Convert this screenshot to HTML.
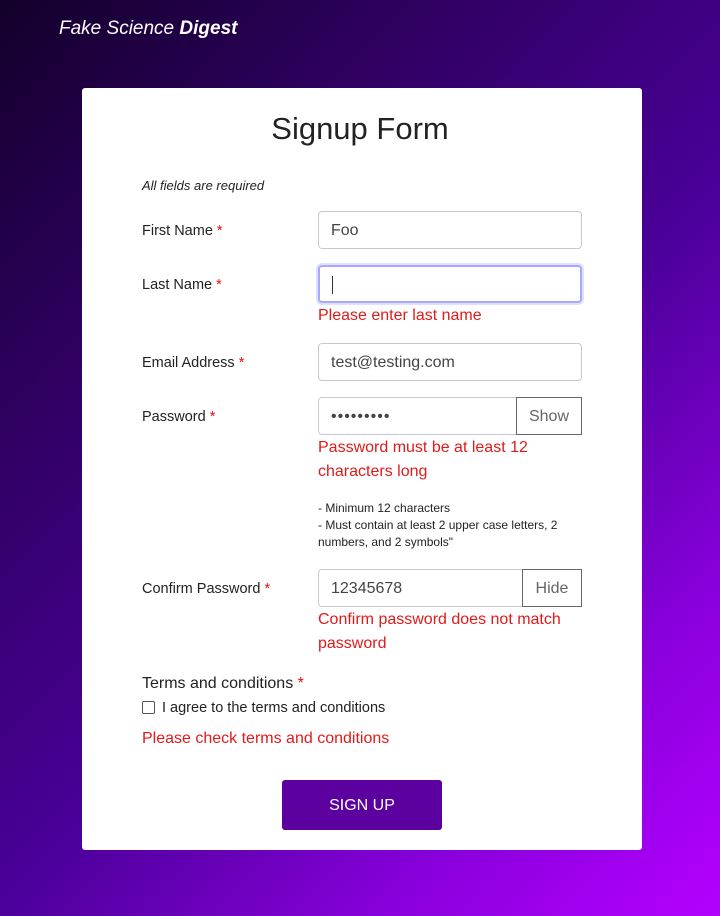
<!DOCTYPE html>
<html><head><meta charset="utf-8"><style>
*{box-sizing:border-box;margin:0;padding:0}
body{width:720px;height:916px;overflow:hidden;font-family:"Liberation Sans",sans-serif;background:linear-gradient(135deg,#13002a 0%,#2d005e 25%,#4a0098 55%,#8a00dd 80%,#b400ff 100%);position:relative}
.a{position:absolute}
.logo{left:59px;top:18px;color:#fff;font-style:italic;font-size:19px}
.card{left:82px;top:88px;width:560px;height:762px;background:#fff;border-radius:3px}
h1{position:absolute;left:0;width:720px;top:111px;text-align:center;font-weight:normal;font-size:31px;color:#222}
.lbl{font-size:14.5px;color:#222;left:142px}
.lbl b{color:#e01010;font-weight:normal}
.in{left:318px;width:264px;height:38px;border:1px solid #c8c8d0;border-radius:4px;font-size:16px;color:#444;padding:10px 12px;background:#fff}
.err{left:318px;color:#e01a1a;font-size:16px;line-height:24px}
.btn{border:1px solid #666;font-size:16px;color:#666;height:38px;text-align:center;padding-top:10px;background:#fff}
</style></head><body>
<div class="a logo">Fake Science <b>Digest</b></div>
<div class="a card"></div>
<h1>Signup Form</h1>
<div class="a" style="left:142px;top:178px;font-size:13px;font-style:italic;color:#222">All fields are required</div>
<div class="a lbl" style="top:223px">First Name <b>*</b></div>
<div class="a in" style="top:211px">Foo</div>
<div class="a lbl" style="top:277px">Last Name <b>*</b></div>
<div class="a in" style="top:265px;border:2px solid #a8a8ff;box-shadow:0 0 0 2px #e0e0ff"><span style="display:inline-block;width:1px;height:18px;background:#333;margin-top:-1px"></span></div>
<div class="a err" style="top:304px">Please enter last name</div>
<div class="a lbl" style="top:355px">Email Address <b>*</b></div>
<div class="a in" style="top:343px">test@testing.com</div>
<div class="a lbl" style="top:409px">Password <b>*</b></div>
<div class="a in" style="top:397px;width:200px;border-radius:4px 0 0 4px;letter-spacing:1px">•••••••••</div>
<div class="a btn" style="left:516px;top:397px;width:66px">Show</div>
<div class="a err" style="top:436px">Password must be at least 12<br>characters long</div>
<div class="a" style="left:318px;top:500px;font-size:12px;line-height:17px;color:#222">- Minimum 12 characters<br>- Must contain at least 2 upper case letters, 2<br>numbers, and 2 symbols"</div>
<div class="a lbl" style="top:581px">Confirm Password <b>*</b></div>
<div class="a in" style="top:569px;width:206px;border-radius:4px 0 0 4px">12345678</div>
<div class="a btn" style="left:522px;top:569px;width:60px">Hide</div>
<div class="a err" style="top:608px">Confirm password does not match<br>password</div>
<div class="a" style="left:142px;top:675px;font-size:16px;color:#222">Terms and conditions <span style="color:#e01010">*</span></div>
<div class="a" style="left:142px;top:701px;width:13px;height:13px;border:1px solid #555;border-radius:2px"></div>
<div class="a" style="left:162px;top:700px;font-size:14.5px;color:#222">I agree to the terms and conditions</div>
<div class="a err" style="left:142px;top:727px">Please check terms and conditions</div>
<div class="a" style="left:282px;top:780px;width:160px;height:50px;background:#5c00a0;border-radius:3px;color:#fff;font-size:16px;text-align:center;line-height:52px">SIGN UP</div>
</body></html>
